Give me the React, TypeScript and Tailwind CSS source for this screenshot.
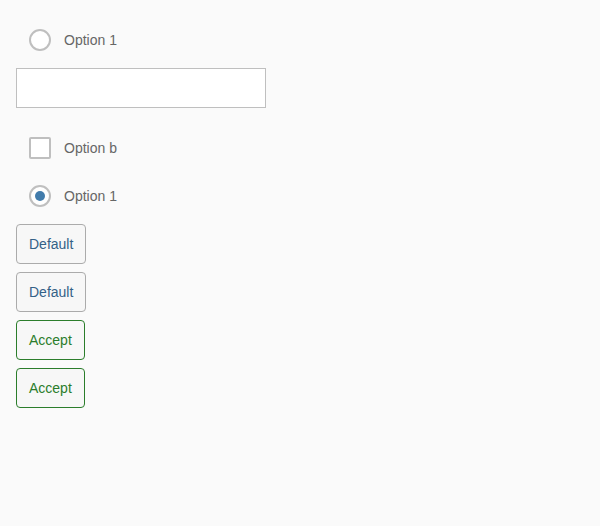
import React from "react";

export default function App() {
  const font = { fontFamily: '"Liberation Sans", Arial, sans-serif' };
  return (
    <div className="min-h-[526px] w-[600px] bg-[#fafafa] px-4 pt-4" style={font}>
      <div className="flex flex-col">
        <label className="flex h-12 items-center pl-[13px]">
          <span className="h-[22px] w-[22px] rounded-full border-2 border-[#bfbfbf] bg-white" />
          <span className="ml-[13px] text-sm text-[#666666]">Option 1</span>
        </label>
        <input className="mt-1 h-10 w-[250px] border border-[#bfbfbf] bg-white px-2 outline-none" />
        <label className="mt-4 flex h-12 items-center pl-[13px]">
          <span className="h-[22px] w-[22px] rounded-[2px] border-2 border-[#bfbfbf] bg-white" />
          <span className="ml-[13px] text-sm text-[#666666]">Option b</span>
        </label>
        <label className="flex h-12 items-center pl-[13px]">
          <span className="flex h-[22px] w-[22px] items-center justify-center rounded-full border-2 border-[#bfbfbf] bg-white">
            <span className="h-[10px] w-[10px] rounded-full bg-[#427cac]" />
          </span>
          <span className="ml-[13px] text-sm text-[#666666]">Option 1</span>
        </label>
        <div className="mt-1 flex flex-col items-start gap-2">
          <button className="h-10 rounded border border-[#ababab] bg-[#f7f7f7] px-3 text-sm text-[#346187]">Default</button>
          <button className="h-10 rounded border border-[#ababab] bg-[#f7f7f7] px-3 text-sm text-[#346187]">Default</button>
          <button className="h-10 rounded border border-[#2b7d2b] bg-[#f7f7f7] px-3 text-sm text-[#2b7d2b]">Accept</button>
          <button className="h-10 rounded border border-[#2b7d2b] bg-[#f7f7f7] px-3 text-sm text-[#2b7d2b]">Accept</button>
        </div>
      </div>
    </div>
  );
}
